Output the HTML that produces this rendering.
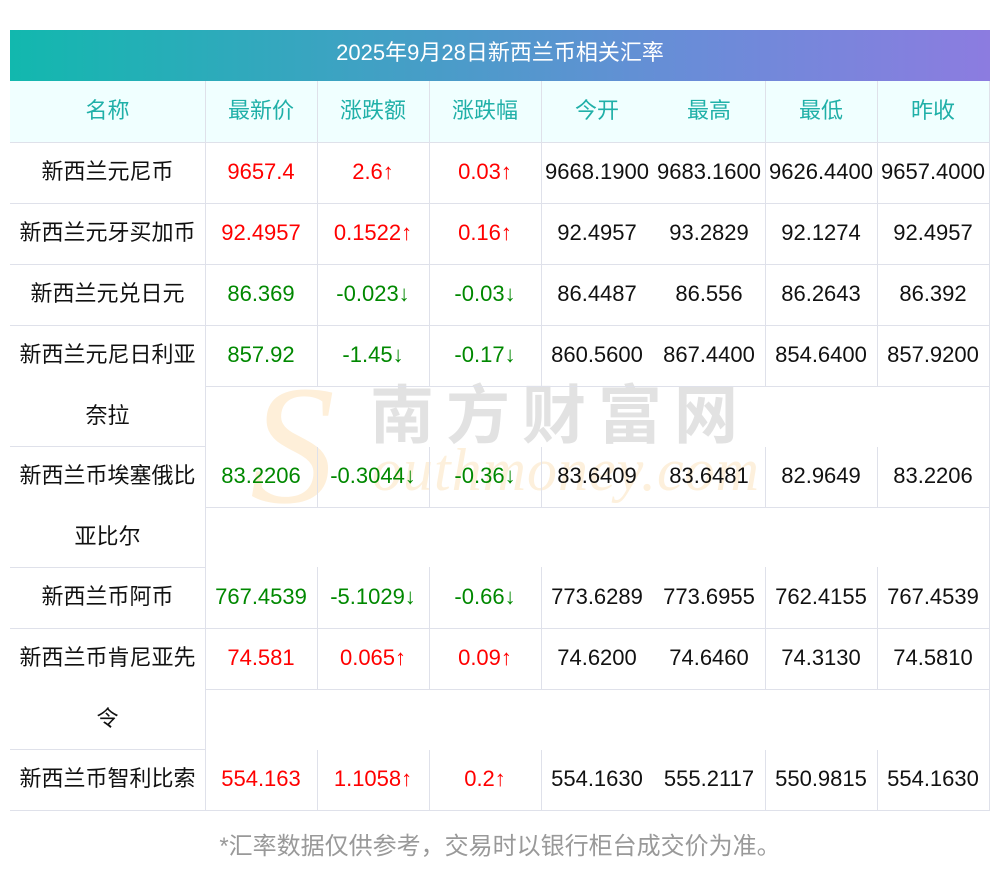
<!DOCTYPE html><html><head><meta charset="utf-8"><style>
body{margin:0;width:1000px;height:877px;background:#fff;position:relative;font-family:"Liberation Sans","Noto Sans CJK SC",sans-serif;overflow:hidden}
.a{position:absolute}
.t{position:absolute;height:61px;line-height:59px;text-align:center;font-size:22px;color:#111;white-space:nowrap}
.h{color:#20b0a8}
.r{color:#f00}.g{color:#080}
.hl{position:absolute;height:1px;background:#dfe1ea}
.vl{position:absolute;width:1px;background:#dfe1ea}
</style></head><body>
<div class="a" style="left:10px;top:30px;width:980px;height:51px;background:linear-gradient(90deg,#12b8ae,#6a8cd8 70%,#8c7ce0);color:#fff;font-size:22px;line-height:46px;text-align:center">2025年9月28日新西兰币相关汇率</div>
<div class="a" style="left:10px;top:81px;width:980px;height:61px;background:#f0ffff"></div>
<div class="a" style="left:250px;top:360px;font-size:170px;font-family:'Liberation Serif',serif;font-style:italic;color:#feefd9;line-height:1">S</div>
<div class="a" style="left:372px;top:440px;font-size:60px;font-family:'Liberation Serif',serif;font-style:italic;color:#fdf0dc;letter-spacing:1px;line-height:1">outhmoney.com</div>
<div class="a" style="left:370px;top:384px;font-size:64px;color:#e2e2e2;letter-spacing:12px;line-height:1;font-weight:bold">南方财富网</div>
<div class="hl" style="left:10px;top:142px;width:980px"></div>
<div class="hl" style="left:10px;top:203px;width:980px"></div>
<div class="hl" style="left:10px;top:264px;width:980px"></div>
<div class="hl" style="left:10px;top:325px;width:980px"></div>
<div class="hl" style="left:205px;top:386px;width:785px"></div>
<div class="hl" style="left:10px;top:446px;width:195px"></div>
<div class="hl" style="left:205px;top:507px;width:785px"></div>
<div class="hl" style="left:10px;top:567px;width:195px"></div>
<div class="hl" style="left:10px;top:628px;width:980px"></div>
<div class="hl" style="left:205px;top:689px;width:785px"></div>
<div class="hl" style="left:10px;top:749px;width:195px"></div>
<div class="hl" style="left:10px;top:810px;width:980px"></div>
<div class="vl" style="left:205px;top:81px;height:729px"></div>
<div class="vl" style="left:989px;top:81px;height:729px"></div>
<div id="v"></div>
<script>
var xs=[317,429,541,765,877];var segs=[[81,386],[447,507],[567,689],[750,810]];var s='';
xs.forEach(function(x){segs.forEach(function(g){s+='<div class="vl" style="left:'+x+'px;top:'+g[0]+'px;height:'+(g[1]-g[0])+'px"></div>'})});
document.getElementById('v').innerHTML=s;
</script>
<div class="t h" style="left:10px;top:81px;width:195px">名称</div>
<div class="t h" style="left:205px;top:81px;width:112px">最新价</div>
<div class="t h" style="left:317px;top:81px;width:112px">涨跌额</div>
<div class="t h" style="left:429px;top:81px;width:112px">涨跌幅</div>
<div class="t h" style="left:541px;top:81px;width:112px">今开</div>
<div class="t h" style="left:653px;top:81px;width:112px">最高</div>
<div class="t h" style="left:765px;top:81px;width:112px">最低</div>
<div class="t h" style="left:877px;top:81px;width:112px">昨收</div>
<div id="rows"></div>
<script>
var R=[
[142,'新西兰元尼币','','r','9657.4','2.6↑','0.03↑','9668.1900','9683.1600','9626.4400','9657.4000'],
[203,'新西兰元牙买加币','','r','92.4957','0.1522↑','0.16↑','92.4957','93.2829','92.1274','92.4957'],
[264,'新西兰元兑日元','','g','86.369','-0.023↓','-0.03↓','86.4487','86.556','86.2643','86.392'],
[325,'新西兰元尼日利亚','奈拉','g','857.92','-1.45↓','-0.17↓','860.5600','867.4400','854.6400','857.9200'],
[446,'新西兰币埃塞俄比','亚比尔','g','83.2206','-0.3044↓','-0.36↓','83.6409','83.6481','82.9649','83.2206'],
[567,'新西兰币阿币','','g','767.4539','-5.1029↓','-0.66↓','773.6289','773.6955','762.4155','767.4539'],
[628,'新西兰币肯尼亚先','令','r','74.581','0.065↑','0.09↑','74.6200','74.6460','74.3130','74.5810'],
[749,'新西兰币智利比索','','r','554.163','1.1058↑','0.2↑','554.1630','555.2117','550.9815','554.1630']];
var h='',X=[205,317,429,541,653,765,877];
R.forEach(function(r){var y=r[0];
h+='<div class="t" style="left:10px;top:'+y+'px;width:195px">'+r[1]+'</div>';
if(r[2])h+='<div class="t" style="left:10px;top:'+(y+61)+'px;width:195px">'+r[2]+'</div>';
for(var i=0;i<7;i++){h+='<div class="t '+(i<3?r[3]:'')+'" style="left:'+X[i]+'px;top:'+y+'px;width:112px">'+r[4+i]+'</div>';}
});
document.getElementById('rows').innerHTML=h;
</script>
<div class="a" style="left:0;top:830px;width:1000px;text-align:center;font-size:24px;color:#999;line-height:34px">*汇率数据仅供参考，交易时以银行柜台成交价为准。</div>
</body></html>
